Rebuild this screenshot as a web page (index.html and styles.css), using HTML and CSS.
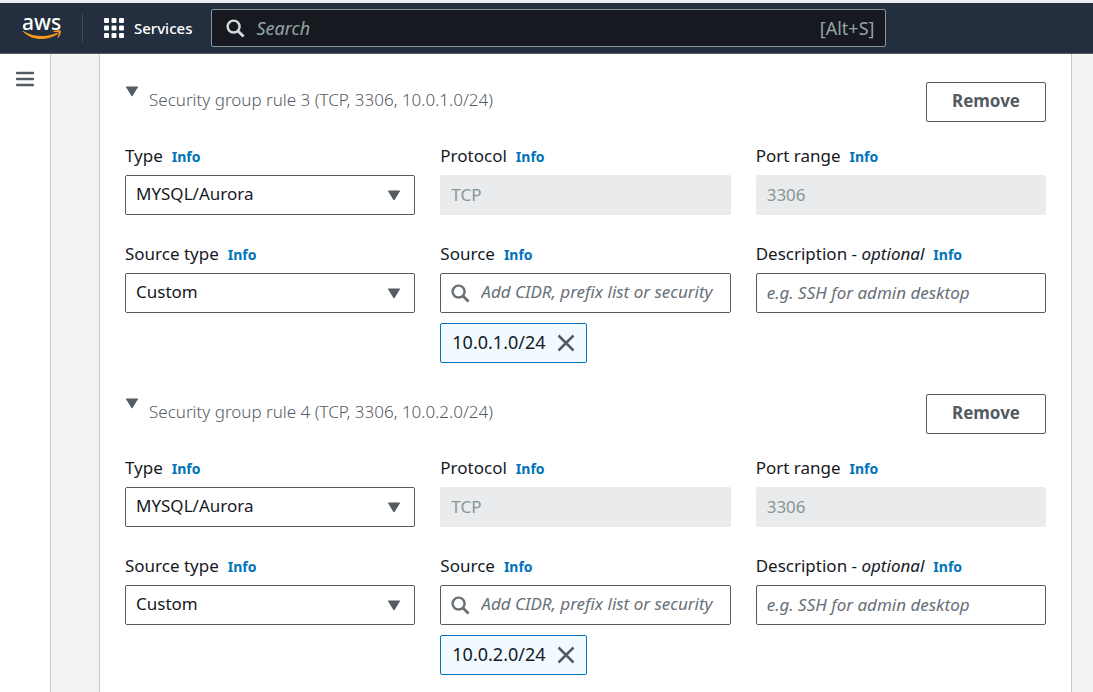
FILE: index.html
```html
<!DOCTYPE html>
<html lang="en">
<head>
<meta charset="utf-8">
<title>Security group rules</title>
<link rel="stylesheet" href="styles.css">
</head>
<body>
<svg class="sprite" aria-hidden="true">
  <symbol id="caret" viewBox="0 0 13 11"><path d="M1 .5h11q.8 0 .4.8L7.2 9.8q-.7 1-1.4 0L.6 1.3Q.2.5 1 .5z" fill="#545b64"/></symbol>
  <symbol id="search" viewBox="0 0 20 20"><circle cx="8" cy="8" r="6.3" fill="none" stroke="currentColor" stroke-width="2.6"/><path d="M12.3 12.3 18.500 18.500" stroke="currentColor" stroke-width="3"/></symbol>
  <symbol id="close" viewBox="0 0 18 18"><path d="M1.5 1.5l15 15M16.5 1.5l-15 15" stroke="#545b64" stroke-width="2.5"/></symbol>
</svg>
<header class="topbar">
  <a class="logo" href="#" aria-label="AWS home">
    <span class="logo-word">aws</span>
    <svg class="logo-smile" viewBox="0 0 40 11" aria-hidden="true">
      <path d="M.6 1.2Q.2.4 1.3.9C12 7.300 24 7.400 34.600 2.900c1.300-.5 2 .5.9 1.300C25 11 10 11 .6 1.200z" fill="#f79a1c"/>
      <path d="M31.500 1.300c2.500-1.200 6.600-1.300 7.200-.5.600.9-.3 5-2.600 7-.5.300-.8.100-.6-.4.600-1.400 1.600-4.300 1.200-4.900-.5-.6-3.400-.5-4.900-.4-.6 0-.7-.4-.3-.8z" fill="#f79a1c"/>
    </svg>
  </a>
  <button class="services" type="button">
    <svg class="services-icon" viewBox="0 0 20 20" fill="#fff" aria-hidden="true">
      <rect width="5" height="5" rx="1"/><rect x="7.500" width="5" height="5" rx="1"/><rect x="15" width="5" height="5" rx="1"/>
      <rect y="7.500" width="5" height="5" rx="1"/><rect x="7.500" y="7.500" width="5" height="5" rx="1"/><rect x="15" y="7.500" width="5" height="5" rx="1"/>
      <rect y="15" width="5" height="5" rx="1"/><rect x="7.500" y="15" width="5" height="5" rx="1"/><rect x="15" y="15" width="5" height="5" rx="1"/>
    </svg>
    Services
  </button>
  <label class="global-search">
    <svg class="search-icon" aria-hidden="true"><use href="#search"/></svg>
    <input class="global-input" type="search" placeholder="Search" aria-label="Search">
    <span class="shortcut">[Alt+S]</span>
  </label>
</header>
<div class="layout">
  <nav class="rail" aria-label="Side navigation">
    <button class="menu" type="button" aria-label="Open navigation">
      <svg class="menu-icon" viewBox="0 0 18 16" aria-hidden="true"><path d="M1 2h16M1 8h16M1 14h16" stroke="#545b64" stroke-width="2.400" stroke-linecap="round"/></svg>
    </button>
  </nav>
  <main class="content">
    <div class="card">
      <section class="rule">
        <div class="rule-head">
          <button class="toggle" type="button" aria-expanded="true"><svg class="caret" aria-hidden="true"><use href="#caret"/></svg><span class="rule-title">Security group rule 3 (TCP, 3306, 10.0.1.0/24)</span></button>
          <button class="remove" type="button">Remove</button>
        </div>
        <div class="fields">
          <div class="field">
            <div class="caption"><label for="type3">Type</label><a class="info" href="#">Info</a></div>
            <div class="select"><select class="control" id="type3"><option>MYSQL/Aurora</option></select><svg class="caret" aria-hidden="true"><use href="#caret"/></svg></div>
          </div>
          <div class="field">
            <div class="caption"><label for="proto3">Protocol</label><a class="info" href="#">Info</a></div>
            <input class="control" id="proto3" value="TCP" disabled>
          </div>
          <div class="field">
            <div class="caption"><label for="port3">Port range</label><a class="info" href="#">Info</a></div>
            <input class="control" id="port3" value="3306" disabled>
          </div>
          <div class="field">
            <div class="caption"><label for="stype3">Source type</label><a class="info" href="#">Info</a></div>
            <div class="select"><select class="control" id="stype3"><option>Custom</option></select><svg class="caret" aria-hidden="true"><use href="#caret"/></svg></div>
          </div>
          <div class="field">
            <div class="caption"><label for="src3">Source</label><a class="info" href="#">Info</a></div>
            <div class="lookup"><svg class="search-icon" aria-hidden="true"><use href="#search"/></svg><input class="lookup-input" id="src3" placeholder="Add CIDR, prefix list or security"></div>
            <div class="token"><span class="token-text">10.0.1.0/24</span><button class="dismiss" type="button" aria-label="Remove 10.0.1.0/24"><svg class="close-icon" aria-hidden="true"><use href="#close"/></svg></button></div>
          </div>
          <div class="field">
            <div class="caption"><label for="desc3">Description - <i>optional</i></label><a class="info" href="#">Info</a></div>
            <input class="control" id="desc3" placeholder="e.g. SSH for admin desktop">
          </div>
        </div>
      </section>
      <section class="rule">
        <div class="rule-head">
          <button class="toggle" type="button" aria-expanded="true"><svg class="caret" aria-hidden="true"><use href="#caret"/></svg><span class="rule-title">Security group rule 4 (TCP, 3306, 10.0.2.0/24)</span></button>
          <button class="remove" type="button">Remove</button>
        </div>
        <div class="fields">
          <div class="field">
            <div class="caption"><label for="type4">Type</label><a class="info" href="#">Info</a></div>
            <div class="select"><select class="control" id="type4"><option>MYSQL/Aurora</option></select><svg class="caret" aria-hidden="true"><use href="#caret"/></svg></div>
          </div>
          <div class="field">
            <div class="caption"><label for="proto4">Protocol</label><a class="info" href="#">Info</a></div>
            <input class="control" id="proto4" value="TCP" disabled>
          </div>
          <div class="field">
            <div class="caption"><label for="port4">Port range</label><a class="info" href="#">Info</a></div>
            <input class="control" id="port4" value="3306" disabled>
          </div>
          <div class="field">
            <div class="caption"><label for="stype4">Source type</label><a class="info" href="#">Info</a></div>
            <div class="select"><select class="control" id="stype4"><option>Custom</option></select><svg class="caret" aria-hidden="true"><use href="#caret"/></svg></div>
          </div>
          <div class="field">
            <div class="caption"><label for="src4">Source</label><a class="info" href="#">Info</a></div>
            <div class="lookup"><svg class="search-icon" aria-hidden="true"><use href="#search"/></svg><input class="lookup-input" id="src4" placeholder="Add CIDR, prefix list or security"></div>
            <div class="token"><span class="token-text">10.0.2.0/24</span><button class="dismiss" type="button" aria-label="Remove 10.0.2.0/24"><svg class="close-icon" aria-hidden="true"><use href="#close"/></svg></button></div>
          </div>
          <div class="field">
            <div class="caption"><label for="desc4">Description - <i>optional</i></label><a class="info" href="#">Info</a></div>
            <input class="control" id="desc4" placeholder="e.g. SSH for admin desktop">
          </div>
        </div>
      </section>
    </div>
  </main>
</div>
</body>
</html>
```
FILE: styles.css
```css
* { box-sizing: border-box; }
body {
  margin: 0;
  min-height: 100vh;
  display: flex;
  flex-direction: column;
  font: 17px/24px "Noto Sans", "Open Sans", sans-serif;
  color: #16191f;
  background: #f2f2f2;
}
button, input, select { font: inherit; color: inherit; }
button { padding: 0; border: 0; background: none; cursor: pointer; }
.sprite { display: none; }

.topbar {
  display: flex;
  align-items: center;
  height: 54px;
  padding-left: 22px;
  background: #232f3e;
  border-top: 3px solid #e9edf0;
  border-bottom: 1px solid #545b64;
}
.logo {
  display: flex;
  flex-direction: column;
  align-items: center;
  width: 61px;
  height: 28px;
  padding-right: 21px;
  border-right: 1px solid #414d5c;
  color: #fff;
  text-decoration: none;
}
.logo-word { font: 500 21px/16px "Noto Sans", sans-serif; }
.logo-smile { width: 40px; height: 11px; flex: none; }
.services {
  display: flex;
  align-items: center;
  gap: 10px;
  margin-left: 21px;
  color: #fff;
  font-size: 15px;
  font-weight: 500;
}
.services-icon { width: 20px; height: 20px; }
.global-search {
  display: flex;
  align-items: center;
  width: 675px;
  height: 38px;
  margin-left: 19px;
  padding: 0 11px 0 14px;
  border: 1px solid #879596;
  border-radius: 2px;
  background: #16191f;
  color: #95a5a6;
}
.global-search .search-icon { color: #d5dbdb; }
.search-icon { width: 19px; height: 19px; flex: none; }
.global-input {
  flex: 1;
  min-width: 0;
  padding: 0 11px;
  border: 0;
  background: none;
  font-size: 18px;
}
.global-input::placeholder { color: #95a5a6; font-style: italic; }
.shortcut { font-size: 18px; }

.layout { flex: 1; display: flex; }
.rail {
  width: 51px;
  padding: 17px 16px;
  background: #fff;
  border-right: 1px solid #c8c8c8;
}
.menu, .menu-icon { display: block; }
.menu-icon { width: 18px; height: 16px; }
.content { flex: 1; min-width: 0; display: flex; padding: 0 21px 0 48px; }
.card {
  flex: 1;
  min-width: 0;
  padding: 28px 25px 17px;
  background: #fff;
  border: solid #c8c8c8;
  border-width: 0 1px;
}
.rule + .rule { margin-top: 31px; }
.rule-head { display: flex; justify-content: space-between; }
.toggle { display: flex; align-items: flex-start; gap: 10px; padding-top: 4px; }
.caret { width: 14px; height: 11px; }
.rule-title { padding-top: 2px; font-weight: 300; color: #545b64; }
.remove {
  width: 120px;
  height: 40px;
  padding-bottom: 2px;
  border: 1px solid #545b64;
  border-radius: 2px;
  color: #545b64;
  font-weight: 700;
}
.fields {
  display: grid;
  grid-template-columns: repeat(3, minmax(0, 1fr));
  gap: 27px 25px;
  margin-top: 22px;
}
.caption {
  display: flex;
  align-items: baseline;
  gap: 9px;
  height: 24px;
  margin-bottom: 7px;
  white-space: nowrap;
}
.info { color: #0073bb; font-size: 14px; font-weight: 700; text-decoration: none; }
.control {
  display: block;
  width: 100%;
  height: 40px;
  padding: 0 10px 2px;
  border: 1px solid #545b64;
  border-radius: 2px;
  background: #fff;
  appearance: none;
}
.control:disabled { background: #eaebed; border-color: #eaebed; color: #879596; opacity: 1; }
.control::placeholder, .lookup-input::placeholder { color: #687078; font-style: italic; }
.select { display: grid; align-items: center; }
.select > * { grid-area: 1 / 1; }
.select .caret { justify-self: end; margin-right: 14px; pointer-events: none; }
.lookup {
  display: flex;
  align-items: center;
  height: 40px;
  padding: 0 10px;
  border: 1px solid #545b64;
  border-radius: 2px;
  color: #687078;
}
.lookup-input { flex: 1; min-width: 0; padding: 0 0 2px 11px; border: 0; background: none; }
.token {
  display: inline-flex;
  align-items: center;
  gap: 11px;
  height: 40px;
  margin-top: 10px;
  padding: 0 11px;
  border: 1px solid #0073bb;
  border-radius: 2px;
  background: #f1faff;
  vertical-align: top;
}
.token-text { padding-bottom: 2px; font-size: 18px; }
.close-icon { display: block; width: 18px; height: 18px; }
```
